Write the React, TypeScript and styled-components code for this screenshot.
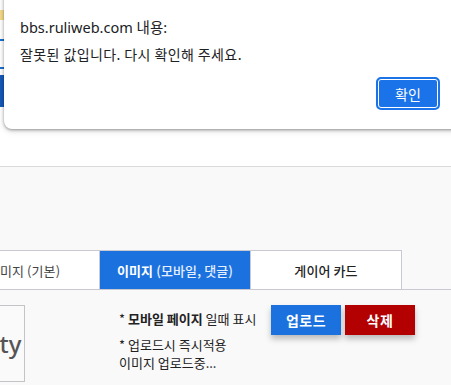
import React from "react";
import styled, { createGlobalStyle } from "styled-components";

const Global = createGlobalStyle`
  html, body { margin: 0; padding: 0; background: #fff; overflow: hidden; }
  body { width: 451px; height: 385px; font-family: "Noto Sans CJK KR", "Noto Sans", sans-serif; }
  * { box-sizing: border-box; }
`;

const Page = styled.div`
  position: relative;
  width: 451px;
  height: 385px;
  overflow: hidden;
  display: flex;
  flex-direction: column;
`;

const BehindStrip = styled.div`
  position: absolute;
  left: 0;
  top: 0;
  width: 6px;
  height: 110px;
  display: flex;
  flex-direction: column;
`;

const StripPart = styled.div<{ $h: number; $c: string }>`
  height: ${(p) => p.$h}px;
  background: ${(p) => p.$c};
`;

const Header = styled.div`
  height: 167px;
  background: #fff;
  border-bottom: 1px solid #dadada;
  flex-shrink: 0;
`;

const Content = styled.div`
  flex: 1;
  background: #f9f9fa;
  padding-top: 83px;
`;

const TabBar = styled.div`
  display: flex;
  margin-left: -51px;
  border-bottom: 1px solid #c9c9d1;
`;

const Tab = styled.div<{ $active?: boolean }>`
  width: 151px;
  height: 39px;
  display: flex;
  align-items: center;
  justify-content: center;
  font-size: 13px;
  font-weight: ${(p) => (p.$active ? 700 : 500)};
  color: ${(p) => (p.$active ? "#fff" : "#222")};
  background: ${(p) => (p.$active ? "#1b72de" : "#fff")};
  border-top: 1px solid #c9c9d1;
  border-right: 1px solid #c9c9d1;
  letter-spacing: 0.1px;
`;

const TabLight = styled.span`
  font-weight: 400;
  color: #444;
`;

const TabActiveLight = styled.span`
  font-weight: 500;
  color: #e6efff;
`;

const Body = styled.div`
  display: flex;
  align-items: flex-start;
  margin-left: -55px;
  padding-top: 15px;
`;

const ImageBox = styled.div`
  width: 80px;
  height: 77px;
  border: 1px solid #c4c4c8;
  background: #fafafa;
  display: flex;
  align-items: center;
  justify-content: center;
  font-family: "Noto Sans", sans-serif;
  font-size: 24px;
  font-weight: 500;
  color: #555;
  padding-right: 0;
`;

const Notes = styled.div`
  margin-left: 94px;
  padding-top: 5px;
  display: flex;
  flex-direction: column;
  font-size: 13px;
  color: #222;
  line-height: 18px;
  width: 152px;
`;

const NoteLine = styled.div<{ $gap?: number }>`
  margin-top: ${(p) => p.$gap ?? 0}px;
  white-space: nowrap;
`;

const Strong = styled.b`
  font-weight: 700;
`;

const Buttons = styled.div`
  display: flex;
  gap: 4px;
`;

const ActionButton = styled.button<{ $bg: string }>`
  width: 70px;
  height: 30px;
  border: none;
  background: ${(p) => p.$bg};
  color: #fff;
  font-family: "Noto Sans CJK KR", sans-serif;
  font-size: 14px;
  font-weight: 700;
  box-shadow: 0 4px 6px rgba(0, 0, 0, 0.25);
  padding: 0;
  letter-spacing: 0.5px;
`;

const Dialog = styled.div`
  position: absolute;
  left: 4px;
  top: -20px;
  width: 470px;
  height: 149px;
  background: #fff;
  border-radius: 8px;
  box-shadow: 0 1px 3px rgba(0, 0, 0, 0.35), 0 2px 6px rgba(0, 0, 0, 0.15);
  padding: 37px 0 0 16px;
  display: flex;
  flex-direction: column;
`;

const DialogTitle = styled.div`
  font-family: "Noto Sans", "Noto Sans CJK KR", sans-serif;
  font-size: 14.5px;
  color: #202124;
  line-height: 20px;
`;

const DialogMsg = styled.div`
  margin-top: 8px;
  font-size: 14px;
  color: #202124;
  line-height: 19px;
  letter-spacing: 0.4px;
`;

const DialogFooter = styled.div`
  display: flex;
  justify-content: flex-end;
  padding-right: 34px;
  margin-top: 13px;
`;

const OkButton = styled.button`
  width: 64px;
  height: 33px;
  border-radius: 5px;
  border: 2px solid #1a73e8;
  background: #1a73e8;
  box-shadow: inset 0 0 0 1px #fff;
  color: #fff;
  font-family: "Noto Sans CJK KR", sans-serif;
  font-size: 14px;
  padding: 0;
`;

export default function App() {
  return (
    <>
      <Global />
      <Page>
        <Header />
        <Content>
          <TabBar>
            <Tab>
              <TabLight>이미지 (기본)</TabLight>
            </Tab>
            <Tab $active>
              이미지&nbsp;<TabActiveLight>(모바일, 댓글)</TabActiveLight>
            </Tab>
            <Tab>게이어 카드</Tab>
          </TabBar>
          <Body>
            <ImageBox>Empty</ImageBox>
            <Notes>
              <NoteLine>
                * <Strong>모바일 페이지</Strong> 일때 표시
              </NoteLine>
              <NoteLine $gap={8}>* 업로드시 즉시적용</NoteLine>
              <NoteLine>이미지 업로드중...</NoteLine>
            </Notes>
            <Buttons>
              <ActionButton $bg="#1b72de">업로드</ActionButton>
              <ActionButton $bg="#b30000">삭제</ActionButton>
            </Buttons>
          </Body>
        </Content>
        <BehindStrip>
          <StripPart $h={10} $c="#fff" />
          <StripPart $h={10} $c="#f3d98a" />
          <StripPart $h={19} $c="#fff" />
          <StripPart $h={2} $c="#1b6fd0" />
          <StripPart $h={26} $c="#fff" />
          <StripPart $h={2} $c="#1b6fd0" />
          <StripPart $h={6} $c="#fff" />
          <StripPart $h={32} $c="#1559b8" />
        </BehindStrip>
        <Dialog>
          <DialogTitle>bbs.ruliweb.com 내용:</DialogTitle>
          <DialogMsg>잘못된 값입니다. 다시 확인해 주세요.</DialogMsg>
          <DialogFooter>
            <OkButton>확인</OkButton>
          </DialogFooter>
        </Dialog>
      </Page>
    </>
  );
}
